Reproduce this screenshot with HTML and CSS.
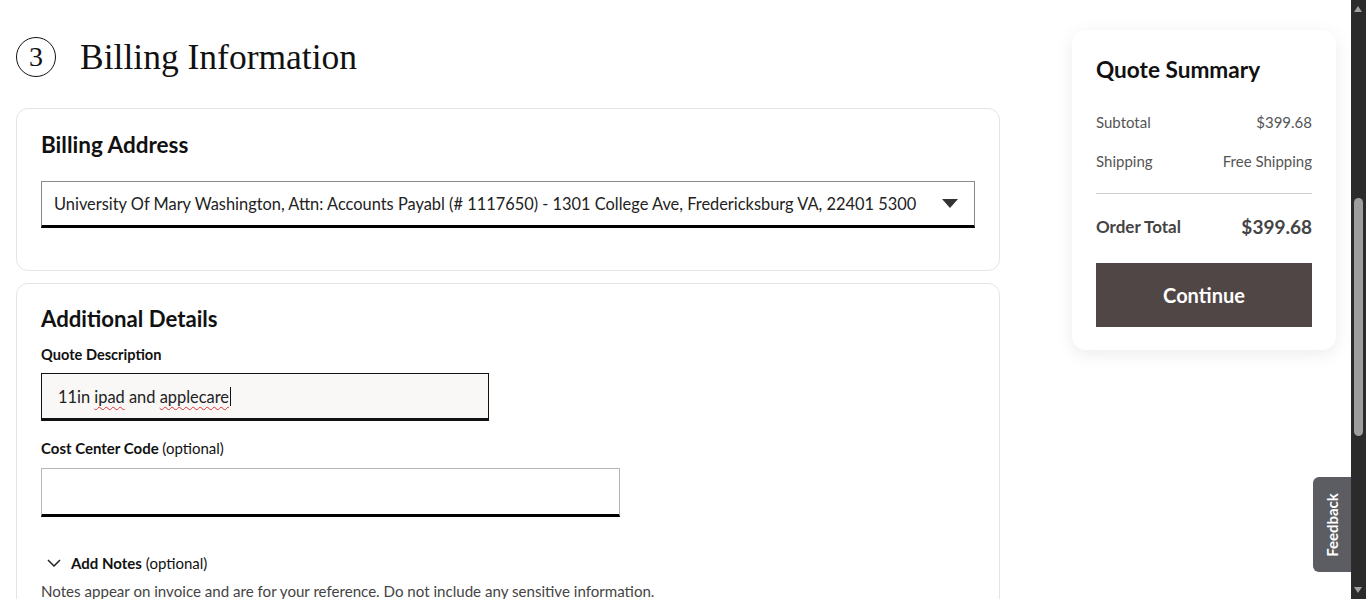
FILE: index.html
```html
<!DOCTYPE html>
<html lang="en">
<head>
<meta charset="utf-8">
<title>Billing Information</title>
<link rel="stylesheet" href="styles.css">
</head>
<body>
<div class="page">
  <main class="main">
    <h1 class="step"><span class="step-num">3</span><span class="step-title">Billing Information</span></h1>

    <section class="card billing">
      <h2 class="card-title">Billing Address</h2>
      <div class="select">
        <span class="select-text">University Of Mary Washington, Attn: Accounts Payabl (# 1117650) - 1301 College Ave, Fredericksburg VA, 22401 5300</span>
        <svg class="select-caret" width="16" height="9" viewBox="0 0 16 9"><path d="M0 0h16L8 9z" fill="#333"/></svg>
      </div>
    </section>

    <section class="card details">
      <h2 class="card-title">Additional Details</h2>
      <label class="field-label field-desc">Quote Description</label>
      <div class="input input-desc"><span class="input-text">11in <span class="spell">ipad</span> and <span class="spell">applecare</span></span></div>
      <label class="field-label field-cost">Cost Center Code <span class="opt">(optional)</span></label>
      <div class="input input-cost"></div>
      <div class="notes-toggle">
        <svg class="chev" width="14" height="8" viewBox="0 0 14 8"><path d="M1 1l6 6 6-6" fill="none" stroke="#222" stroke-width="1.5"/></svg>
        <span class="notes-label">Add Notes</span> <span class="opt">(optional)</span>
      </div>
      <p class="notes-help">Notes appear on invoice and are for your reference. Do not include any sensitive information.</p>
    </section>
  </main>

  <aside class="summary">
    <h2 class="summary-title">Quote Summary</h2>
    <div class="row"><span>Subtotal</span><span>$399.68</span></div>
    <div class="row"><span>Shipping</span><span>Free Shipping</span></div>
    <hr class="divider">
    <div class="row total"><span>Order Total</span><span class="total-val">$399.68</span></div>
    <button class="continue">Continue</button>
  </aside>
</div>

<div class="feedback"><span>Feedback</span></div>

<div class="scrollbar">
  <span class="arrow up"></span>
  <span class="thumb"></span>
  <span class="arrow down"></span>
</div>
</body>
</html>
```

FILE: styles.css
```css
* { box-sizing: border-box; }
html, body { margin: 0; padding: 0; height: 100%; overflow: hidden; background: #fff; }
body { font-family: "Lato", "Noto Sans", sans-serif; color: #1a1a1a; }

.page {
  display: flex;
  align-items: flex-start;
  gap: 72px;
  padding: 36px 0 0 16px;
}
.main { width: 984px; flex: none; }

.step {
  display: flex;
  align-items: center;
  gap: 24px;
  margin: 0 0 30px;
  font-family: "Liberation Serif", serif;
  font-weight: 400;
  color: #111;
}
.step-num {
  width: 40px; height: 40px;
  border: 1.5px solid #111;
  border-radius: 50%;
  display: flex; align-items: center; justify-content: center;
  font-size: 28px;
}
.step-title { font-size: 35.5px; }

.card {
  border: 1px solid #e4e4e4;
  border-radius: 12px;
  padding: 22px 24px 24px;
  margin-bottom: 12px;
  background: #fff;
}
.card-title {
  margin: 0 0 21px;
  font-size: 22.5px;
  font-weight: 700;
  color: #111;
  line-height: 30px;
}
.billing { padding: 21px 24px 42px; }

.select {
  height: 47px;
  border: 1px solid #8a8a8a;
  border-bottom: 3px solid #000;
  display: flex;
  align-items: center;
  justify-content: space-between;
  padding: 0 16px 0 12px;
}
.select-text { font-size: 16.4px; color: #222; white-space: nowrap; }

.details { padding-top: 20px; }
.details .card-title { margin-bottom: 11px; font-size: 22.2px; }
.field-label {
  display: block;
  font-size: 15px;
  font-weight: 700;
  color: #111;
  line-height: 20px;
  margin-bottom: 9px;
}
.field-desc { font-size: 14.6px; margin-bottom: 8px; }
.field-cost { margin-top: -1px; margin-bottom: 10px; }
.opt { font-weight: 400; }
.input {
  height: 47px;
  border: 1px solid #b5b5b5;
  border-bottom: 3px solid #000;
  background: #fff;
  margin-bottom: 17px;
  display: flex;
  align-items: center;
  padding: 0 16px;
}
.input-desc { width: 448px; height: 48px; margin-bottom: 18px; background: #f9f8f7; border-color: #111; }
.input-cost { width: 579px; height: 49px; margin-bottom: 36px; }
.input-text { font-size: 16.4px; color: #222; border-right: 1.5px solid #111; padding-right: 1px; }
.spell { text-decoration: underline wavy #d33; text-decoration-thickness: 1px; text-underline-offset: 3px; }

.notes-toggle {
  display: flex; align-items: center;
  font-size: 15px; color: #111;
  padding-left: 6px;
  line-height: 20px;
}
.chev { margin-right: 10px; }
.notes-label { font-weight: 700; margin-right: 4px; }
.notes-help { margin: 9px 0 0; font-size: 15.1px; color: #444; }

.summary {
  width: 264px;
  flex: none;
  display: flex;
  flex-direction: column;
  margin-top: -6px;
  background: #fff;
  border-radius: 14px;
  box-shadow: 0 4px 18px rgba(0,0,0,0.08);
  padding: 25px 24px 23px;
}
.summary-title { margin: 0 0 27px; font-size: 22.6px; font-weight: 700; color: #111; line-height: 30px; }
.row { display: flex; justify-content: space-between; font-size: 15px; color: #555; line-height: 20px; margin-bottom: 19px; }
.divider { width: 100%; border: 0; border-top: 1px solid #cfcfcf; margin: 3px 0 23px; }
.total { color: #444; font-size: 17px; font-weight: 700; align-items: center; margin-bottom: 26px; }
.total-val { font-size: 19px; }
.continue {
  display: block; width: 100%;
  height: 64px;
  border: 0;
  background: #514646;
  color: #fff;
  font-family: inherit;
  font-size: 20px;
  font-weight: 700;
}

.feedback {
  position: fixed;
  right: 15px;
  top: 477px;
  width: 38px; height: 95px;
  background: #5c5c63;
  border-radius: 6px 0 0 6px;
  display: flex; align-items: center; justify-content: center;
}
.feedback span {
  transform: rotate(-90deg);
  color: #fff; font-weight: 700; font-size: 15px;
  white-space: nowrap;
}

.scrollbar {
  position: fixed;
  right: 0; top: 0;
  width: 15px; height: 100%;
  background: #2b2b2b;
}
.thumb {
  position: absolute;
  left: 3px; top: 198px;
  width: 9px; height: 238px;
  border-radius: 5px;
  background: #9e9e9e;
}
.arrow {
  position: absolute; left: 3px;
  width: 0; height: 0;
  border-left: 4.5px solid transparent;
  border-right: 4.5px solid transparent;
}
.arrow.up { top: 6px; border-bottom: 6px solid #a0a0a0; }
.arrow.down { bottom: 6px; border-top: 6px solid #a0a0a0; }
```
